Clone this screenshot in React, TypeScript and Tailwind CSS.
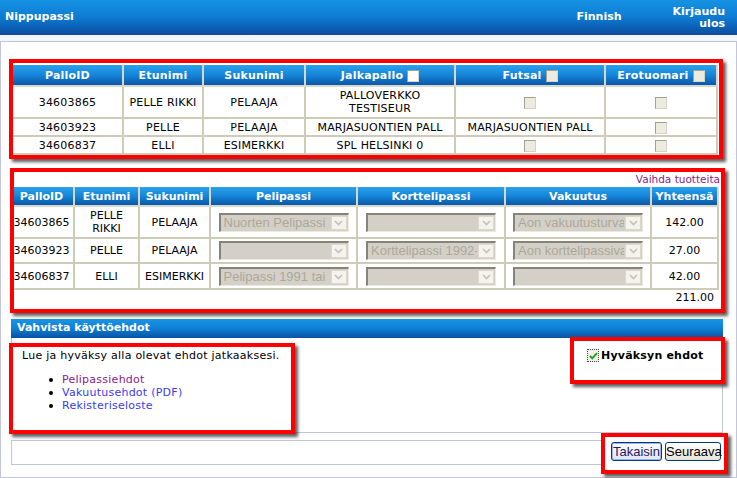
const sans = "font-['DejaVu_Sans',Verdana,sans-serif]";
const arial = "font-['Liberation_Sans',Arial,sans-serif]";

const th =
  "border-r-2 border-b-2 border-[#d9d6ca] bg-linear-to-b from-[#2aa2ec] via-[#1585d9] to-[#0b57a8] px-[2px] text-center text-[11px] font-bold text-white";
const td = "border-r-2 border-b-2 border-[#cfcbb9] px-[2px] text-center align-middle";
const red = "border-4 border-[#ff0000] shadow-[3px_3px_3px_rgba(40,40,40,0.75)]";

function Box({ kind }: { kind: "white" | "off" }) {
  return (
    <span
      className={
        "inline-block h-[12px] w-[12px] border border-t-[#a3a092] border-l-[#a3a092] border-r-[#d6d3c6] border-b-[#d6d3c6] align-middle " +
        (kind === "white" ? "bg-white" : "bg-[#ecebe0]")
      }
    />
  );
}

function Select({ text }: { text?: string }) {
  return (
    <div className="mx-auto flex h-[19px] w-[130px] border-t-2 border-l-2 border-t-[#85837a] border-l-[#85837a] border-r border-b border-r-[#ece9df] border-b-[#ece9df] bg-[#d4d0c8]">
      <span
        className={`${arial} min-w-0 flex-1 overflow-hidden whitespace-nowrap pl-[3px] text-left text-[13px] leading-[16px] text-[#aca899]`}
      >
        {text}
      </span>
      <span className="m-px flex w-[16px] items-center justify-center border border-[#dcd9cc] bg-[#f4f3ee]">
        <svg width="9" height="6" viewBox="0 0 9 6">
          <path d="M1 1l3.5 3.5L8 1" stroke="#c6c3b5" strokeWidth="1.7" fill="none" />
        </svg>
      </span>
    </div>
  );
}

const players = [
  { id: "34603865", first: "PELLE RIKKI", last: "PELAAJA" },
  { id: "34603923", first: "PELLE", last: "PELAAJA" },
  { id: "34606837", first: "ELLI", last: "ESIMERKKI" },
];

function ClubTable() {
  return (
    <table className="w-[704px] table-fixed border-collapse text-[11px] leading-[13px] tracking-[0.2px] text-black">
      <colgroup>
        <col className="w-[110px]" />
        <col className="w-[80px]" />
        <col className="w-[102px]" />
        <col className="w-[150px]" />
        <col className="w-[150px]" />
        <col className="w-[112px]" />
      </colgroup>
      <thead>
        <tr className="h-[21px]">
          <th className={th}>PalloID</th>
          <th className={th}>Etunimi</th>
          <th className={th}>Sukunimi</th>
          <th className={th}>
            Jalkapallo <Box kind="white" />
          </th>
          <th className={th}>
            Futsal <Box kind="off" />
          </th>
          <th className={th}>
            Erotuomari <Box kind="off" />
          </th>
        </tr>
      </thead>
      <tbody>
        <tr className="h-[32px]">
          <td className={td}>34603865</td>
          <td className={td}>PELLE RIKKI</td>
          <td className={td}>PELAAJA</td>
          <td className={td}>
            PALLOVERKKO
            <br />
            TESTISEUR
          </td>
          <td className={td}>
            <Box kind="off" />
          </td>
          <td className={td}>
            <Box kind="off" />
          </td>
        </tr>
        <tr className="h-[18px]">
          <td className={td}>34603923</td>
          <td className={td}>PELLE</td>
          <td className={td}>PELAAJA</td>
          <td className={td}>MARJASUONTIEN PALL</td>
          <td className={td}>MARJASUONTIEN PALL</td>
          <td className={td}>
            <Box kind="off" />
          </td>
        </tr>
        <tr className="h-[18px]">
          <td className={td}>34606837</td>
          <td className={td}>ELLI</td>
          <td className={td}>ESIMERKKI</td>
          <td className={td}>SPL HELSINKI 0</td>
          <td className={td}>
            <Box kind="off" />
          </td>
          <td className={td}>
            <Box kind="off" />
          </td>
        </tr>
      </tbody>
    </table>
  );
}

const products = [
  { pel: "Nuorten Pelipassi", kort: "", vak: "Aon vakuutusturva", sum: "142.00", h: "h-[32px]" },
  { pel: "", kort: "Korttelipassi 1992-", vak: "Aon korttelipassiva", sum: "27.00", h: "h-[25px]" },
  { pel: "Pelipassi 1991 tai", kort: "", vak: "", sum: "42.00", h: "h-[26px]" },
];

function ProductTable() {
  return (
    <table className="ml-[-4px] w-[708px] table-fixed border-collapse text-[11px] leading-[13px] text-black">
      <colgroup>
        <col className="w-[64px]" />
        <col className="w-[65px]" />
        <col className="w-[71px]" />
        <col className="w-[147px]" />
        <col className="w-[148px]" />
        <col className="w-[146px]" />
        <col className="w-[67px]" />
      </colgroup>
      <thead>
        <tr className="h-[19px]">
          <th className={th}>PalloID</th>
          <th className={th}>Etunimi</th>
          <th className={th}>Sukunimi</th>
          <th className={th}>Pelipassi</th>
          <th className={th}>Korttelipassi</th>
          <th className={th}>Vakuutus</th>
          <th className={th}>Yhteensä</th>
        </tr>
      </thead>
      <tbody>
        {players.map((p, i) => (
          <tr key={p.id} className={products[i].h}>
            <td className={td}>{p.id}</td>
            <td className={td}>
              {p.first === "PELLE RIKKI" ? (
                <>
                  PELLE
                  <br />
                  RIKKI
                </>
              ) : (
                p.first
              )}
            </td>
            <td className={td}>{p.last}</td>
            <td className={td}>
              <Select text={products[i].pel} />
            </td>
            <td className={td}>
              <Select text={products[i].kort} />
            </td>
            <td className={td}>
              <Select text={products[i].vak} />
            </td>
            <td className={td}>{products[i].sum}</td>
          </tr>
        ))}
        <tr className="h-[16px]">
          <td colSpan={7} className="pr-[4px] text-right">
            211.00
          </td>
        </tr>
      </tbody>
    </table>
  );
}

export default function App() {
  return (
    <div className={`${sans} w-[737px] bg-[#f3f5fa] text-[11px] text-black`}>
      <div className="flex h-[35px] items-center justify-between bg-linear-to-b from-[#1692e3] via-[#0e7bd2] to-[#0b4b9d] pl-[5px] pr-[12px] text-[11px] font-bold text-white">
        <span>Nippupassi</span>
        <div className="flex items-center gap-[51px]">
          <span>Finnish</span>
          <span className="text-right leading-[12px]">
            Kirjaudu
            <br />
            ulos
          </span>
        </div>
      </div>

      <div className="mt-[6px] flex flex-col border border-[#c3c6da] bg-white">
        <div className={`${red} ml-[8px] mt-[17px] h-[100px] w-[714px] bg-white pt-[2px]`}>
          <ClubTable />
        </div>

        <div className={`${red} ml-[9px] mt-[9px] h-[145px] w-[715px] overflow-hidden bg-white`}>
          <div className="pr-[1px] text-right text-[10.5px] leading-[15px] text-[#8a1a8a]">Vaihda tuotteita</div>
          <ProductTable />
        </div>

        <div className="ml-[10px] mt-[6px] w-[712px]">
          <div className="flex h-[19px] items-center bg-linear-to-b from-[#1a95e5] via-[#0f7fd4] to-[#0b52a3] pl-[6px] text-[11px] font-bold text-white">
            Vahvista käyttöehdot
          </div>
          <div className="flex h-[95px] items-start justify-between border-x border-b border-[#c3c6da]">
            <div className={`${red} ml-[-3px] mt-[5px] h-[91px] w-[286px] bg-white pl-[9px] pt-[2px] tracking-[0.25px]`}>
              <p className="leading-[14px]">Lue ja hyväksy alla olevat ehdot jatkaaksesi.</p>
              <ul className="ml-[27px] mt-[10px] leading-[13px]">
                {[
                  ["Pelipassiehdot", "text-[#8a1a8a]"],
                  ["Vakuutusehdot (PDF)", "text-[#3a3af0]"],
                  ["Rekisteriseloste", "text-[#3a3af0]"],
                ].map(([t, c]) => (
                  <li key={t} className="flex items-center gap-[9px]">
                    <span className="h-[4px] w-[4px] rounded-full bg-black" />
                    <span className={c}>{t}</span>
                  </li>
                ))}
              </ul>
            </div>
            <div className={`${red} mr-[-3px] mt-[-1px] flex h-[47px] w-[155px] items-start bg-white pl-[13px] pt-[8px]`}>
              <span className="flex h-[13px] w-[12px] items-center justify-center border border-dotted border-[#444] bg-[#f1f0e8]">
                <svg width="9" height="8" viewBox="0 0 9 8">
                  <path d="M1 4l2.3 2.4L8 1.2" stroke="#21a121" strokeWidth="2" fill="none" />
                </svg>
              </span>
              <span className="ml-[2px] text-[11px] font-bold leading-[13px] tracking-[0.2px]">Hyväksyn ehdot</span>
            </div>
          </div>
        </div>

        <div className="mb-[12px] ml-[10px] mt-[7px] flex h-[25px] w-[712px] items-center justify-end border border-[#c3c6da]">
          <div className={`${red} mr-[-6px] mt-[2px] flex h-[41px] w-[127px] shrink-0 items-start gap-[3px] bg-white pl-[6px] pt-[5px]`}>
            <button
              className={`${arial} h-[19px] w-[51px] rounded-[3px] border border-[#003c74] bg-linear-to-b from-[#fdfdff] to-[#dfe4f6] text-[13px] leading-[15px] text-[#2a1a5a] shadow-[inset_0_0_0_1px_#9db5ee]`}
            >
              Takaisin
            </button>
            <button
              className={`${arial} h-[19px] w-[56px] rounded-[3px] border border-[#003c74] bg-linear-to-b from-[#ffffff] to-[#e6e3d8] text-[13px] leading-[15px] text-black`}
            >
              Seuraava
            </button>
          </div>
        </div>
      </div>
    </div>
  );
}
